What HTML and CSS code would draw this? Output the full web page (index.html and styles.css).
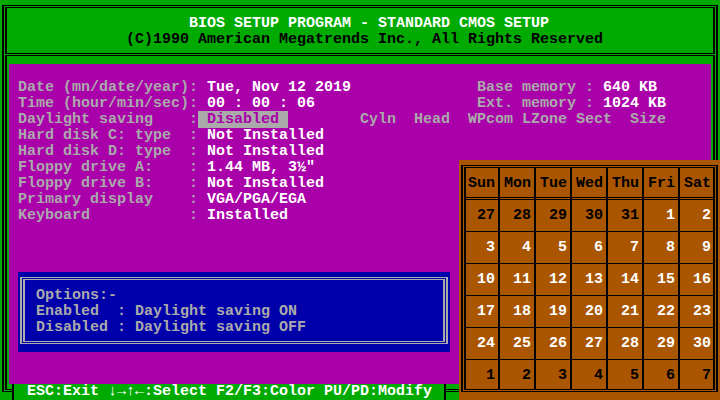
FILE: index.html
```html
<!DOCTYPE html>
<html>
<head>
<meta charset="utf-8">
<title>BIOS Setup</title>
<link rel="stylesheet" href="styles.css">
</head>
<body>
<div class="screen">
  <div class="frame">
    <div class="frame-top"></div>
    <div class="frame-bottom"></div>
  </div>
  <div class="title">BIOS SETUP PROGRAM - STANDARD CMOS SETUP</div>
  <div class="copyright">(C)1990 American Megatrends Inc., All Rights Reserved</div>
  <div class="panel">
<div class="fields"><div>Date (mn/date/year): <span class="v">Tue, Nov 12 2019</span>              Base memory : <span class="v">640 KB</span></div><div>Time (hour/min/sec): <span class="v">00 : 00 : 06</span>                  Ext. memory : <span class="v">1024 KB</span></div><div>Daylight saving    :<span class="hl"> Disabled </span>        Cyln  Head  WPcom LZone Sect  Size</div><div>Hard disk C: type  : <span class="v">Not Installed</span></div><div>Hard disk D: type  : <span class="v">Not Installed</span></div><div>Floppy drive A:    : <span class="v">1.44 MB, 3½"</span></div><div>Floppy drive B:    : <span class="v">Not Installed</span></div><div>Primary display    : <span class="v">VGA/PGA/EGA</span></div><div>Keyboard           : <span class="v">Installed</span></div></div>
    <div class="opts">
      <div class="opts-outer">
<div class="opts-inner"><div>Options:-</div><div>Enabled  : Daylight saving ON</div><div>Disabled : Daylight saving OFF</div></div>
      </div>
    </div>
  </div>
  <div class="footer">ESC:Exit ↓→↑←:Select F2/F3:Color PU/PD:Modify</div>
  <div class="cal">
    <div class="cal-outer">
      <div class="cal-inner">
        <div class="c h">Sun</div><div class="c h">Mon</div><div class="c h">Tue</div><div class="c h">Wed</div><div class="c h">Thu</div><div class="c h">Fri</div><div class="c h">Sat</div>
        <div class="c">27</div><div class="c">28</div><div class="c">29</div><div class="c">30</div><div class="c">31</div><div class="c cur">1</div><div class="c cur">2</div>
        <div class="c cur">3</div><div class="c cur">4</div><div class="c cur">5</div><div class="c cur">6</div><div class="c cur">7</div><div class="c cur">8</div><div class="c cur">9</div>
        <div class="c cur">10</div><div class="c cur">11</div><div class="c cur">12</div><div class="c cur">13</div><div class="c cur">14</div><div class="c cur">15</div><div class="c cur">16</div>
        <div class="c cur">17</div><div class="c cur">18</div><div class="c cur">19</div><div class="c cur">20</div><div class="c cur">21</div><div class="c cur">22</div><div class="c cur">23</div>
        <div class="c cur">24</div><div class="c cur">25</div><div class="c cur">26</div><div class="c cur">27</div><div class="c cur">28</div><div class="c cur">29</div><div class="c cur">30</div>
        <div class="c last">1</div><div class="c last">2</div><div class="c last">3</div><div class="c last">4</div><div class="c last">5</div><div class="c last">6</div><div class="c last">7</div>
      </div>
    </div>
  </div>
</div>
</body>
</html>
```

FILE: styles.css
```css
* {
  box-sizing: border-box;
  margin: 0;
  padding: 0;
}

html,
body {
  width: 720px;
  height: 400px;
  overflow: hidden;
  background: #00aa00;
}

body {
  font-family: "Liberation Mono", "DejaVu Sans Mono", monospace;
  font-size: 15px;
  line-height: 16px;
  font-weight: bold;
  color: #aaaaaa;
}

.screen {
  display: grid;
  grid-template-columns: repeat(80, 9px);
  grid-template-rows: repeat(25, 16px);
  width: 720px;
  height: 400px;
  background: #00aa00;
}

/* outer double-line frame */
.frame {
  grid-area: 1 / 1 / 26 / 81;
  margin: 5px 2px 8px;
  border: solid #000;
  border-width: 1px 2px;
  padding: 1px;
  display: flex;
  flex-direction: column;
  gap: 1px;
}

.frame-top {
  height: 47px;
  border: solid #000;
  border-width: 1px 2px;
}

.frame-bottom {
  flex: 1;
  border: solid #000;
  border-width: 1px 2px;
}

.title {
  grid-area: 2 / 22 / 3 / 62;
  color: #ffffff;
  white-space: pre;
}

.copyright {
  grid-area: 3 / 15 / 4 / 68;
  color: #000000;
  white-space: pre;
}

/* magenta working area */
.panel {
  grid-area: 5 / 2 / 25 / 80;
  background: #aa00aa;
  padding: 16px 0 0 9px;
}

.fields {
  white-space: pre;
  color: #aaaaaa;
}

.v {
  color: #ffffff;
}

.hl {
  background: #aaaaaa;
  color: #aa00aa;
}

/* options help box */
.opts {
  margin-top: 48px;
  width: 432px;
  height: 80px;
  background: #0000aa;
  padding: 5px 2px 8px;
}

.opts-outer {
  height: 100%;
  border: solid #aaaaaa;
  border-width: 1px 2px;
  padding: 1px;
}

.opts-inner {
  height: 100%;
  border: solid #aaaaaa;
  border-width: 1px 2px;
  padding: 8px 0 0 11px;
  white-space: pre;
  color: #aaaaaa;
}

/* bottom status line */
.footer {
  grid-area: 25 / 2 / 26 / 51;
  margin: 0 4px 0 3px;
  background: #00aa00;
  border: solid #000;
  border-width: 0 2px;
  padding-left: 13px;
  color: #ffffff;
  white-space: pre;
}

/* calendar popup */
.cal {
  grid-area: 11 / 52 / 26 / 81;
  background: #aa5500;
  padding: 5px 2px 8px;
}

.cal-outer {
  height: 100%;
  border: solid #000;
  border-width: 1px 2px;
  padding: 1px;
}

.cal-inner {
  height: 100%;
  border: solid #000;
  border-width: 1px 2px;
  display: grid;
  grid-template-columns: 32px repeat(5, 34px) 33px;
  grid-template-rows: repeat(6, 32px) 29px;
  column-gap: 2px;
  background: #000;
}

.c {
  background: #aa5500;
  padding: 8px 3px 0 0;
  text-align: right;
  color: #000;
  border-bottom: 1px solid #000;
}

.c:nth-child(7n) {
  padding-right: 2px;
}

.c.h {
  border-bottom: 3px double #000;
}

.c.cur {
  color: #ffffff;
}

.c.last {
  border-bottom: 0;
}
```
